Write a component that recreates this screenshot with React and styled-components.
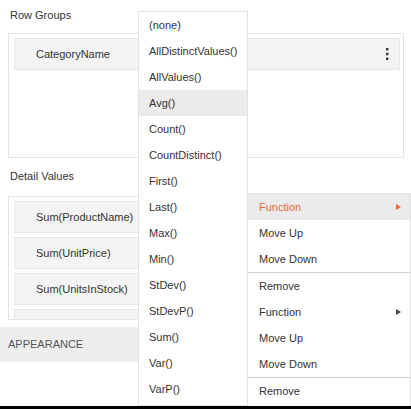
import React from "react";
import styled, { createGlobalStyle } from "styled-components";

const Global = createGlobalStyle`
  html { background: #000; }
  body {
    margin: 0;
    background: #000;
    font-family: "Liberation Sans", Arial, sans-serif;
  }
  * { box-sizing: border-box; }
`;

const Page = styled.div`
  position: relative;
  width: 411px;
  height: 406px;
  background: #fff;
  overflow: hidden;
  font-size: 11px;
  color: #333;
`;

const Section = styled.div`
  padding: 0 7px 0 8px;
`;

const Label = styled.div`
  height: ${(p) => p.$h}px;
  line-height: ${(p) => p.$lh}px;
  padding-left: 2px;
  font-size: 11px;
  color: #333;
`;

const Box = styled.div`
  height: ${(p) => p.$h}px;
  border: 1px solid #e4e4e4;
  padding: 4px 3px 0 5px;
  overflow: hidden;
`;

const Item = styled.div`
  display: flex;
  align-items: center;
  justify-content: space-between;
  height: 32px;
  margin-bottom: 4px;
  padding: 0 10px 0 21px;
  background: #f4f4f4;
  border: 1px solid #e8e8e8;
  color: #333;
`;

const Kebab = styled.svg`
  width: 4px;
  height: 12px;
  display: block;
`;

const Appearance = styled.div`
  margin-top: 7px;
  height: 35px;
  line-height: 35px;
  padding-left: 8px;
  background: #eeeeee;
  color: #555;
  font-size: 11px;
`;

const Menu = styled.div`
  position: absolute;
  left: ${(p) => p.$left}px;
  top: ${(p) => p.$top}px;
  width: ${(p) => p.$w}px;
  background: #fff;
  border: 1px solid #e2e2e2;
  padding-bottom: 3px;
`;

const MenuItem = styled.div`
  display: flex;
  align-items: center;
  justify-content: space-between;
  height: 26px;
  padding: 0 7px 0 ${(p) => p.$pl}px;
  background: ${(p) => (p.$active ? "#ebebeb" : "transparent")};
  color: ${(p) => (p.$accent ? "#ee6a3a" : "#333")};
  white-space: nowrap;
`;

const Separator = styled.div`
  height: 1px;
  background: #cfcfcf;
`;

const Arrow = styled.span`
  width: 0;
  height: 0;
  border-top: 3.5px solid transparent;
  border-bottom: 3.5px solid transparent;
  border-left: 5px solid ${(p) => (p.$accent ? "#ee6a3a" : "#444")};
  margin-right: 2px;
`;

const functions = [
  "(none)",
  "AllDistinctValues()",
  "AllValues()",
  "Avg()",
  "Count()",
  "CountDistinct()",
  "First()",
  "Last()",
  "Max()",
  "Min()",
  "StDev()",
  "StDevP()",
  "Sum()",
  "Var()",
  "VarP()",
];

const contextItems = [
  { t: "Function", sub: true, active: true },
  { t: "Move Up" },
  { t: "Move Down" },
  { sep: true },
  { t: "Remove" },
  { t: "Function", sub: true },
  { t: "Move Up" },
  { t: "Move Down" },
  { sep: true },
  { t: "Remove" },
];

export default function App() {
  return (
    <>
      <Global />
      <Page>
        <Section>
          <Label $h={33} $lh={30}>Row Groups</Label>
          <Box $h={125}>
            <Item>
              <span>CategoryName</span>
              <Kebab viewBox="0 0 4 12">
                <rect x="1" y="0" width="2.4" height="2.4" fill="#333" />
                <rect x="1" y="4.8" width="2.4" height="2.4" fill="#333" />
                <rect x="1" y="9.6" width="2.4" height="2.4" fill="#333" />
              </Kebab>
            </Item>
          </Box>
          <Label $h={38} $lh={37}>Detail Values</Label>
          <Box $h={124}>
            <Item>Sum(ProductName)</Item>
            <Item>Sum(UnitPrice)</Item>
            <Item>Sum(UnitsInStock)</Item>
            <Item />
          </Box>
        </Section>
        <Appearance>APPEARANCE</Appearance>

        <Menu $left={138} $top={11} $w={110}>
          {functions.map((f) => (
            <MenuItem key={f} $pl={10} $active={f === "Avg()"}>
              {f}
            </MenuItem>
          ))}
        </Menu>

        <Menu $left={247} $top={193} $w={164}>
          {contextItems.map((c, i) =>
            c.sep ? (
              <Separator key={i} />
            ) : (
              <MenuItem key={i} $pl={11} $active={c.active} $accent={c.active}>
                <span>{c.t}</span>
                {c.sub && <Arrow $accent={c.active} />}
              </MenuItem>
            )
          )}
        </Menu>
      </Page>
    </>
  );
}
